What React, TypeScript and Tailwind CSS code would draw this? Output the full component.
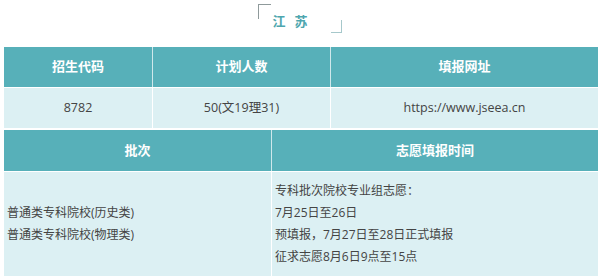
import React from "react";

const headCell =
    "flex items-center justify-center bg-[#57b0b9] text-white text-[13px] font-bold";
const bodyCell = "flex items-center justify-center bg-[#dcf0f3] text-[#444] text-[12.5px]";

const App = () => {
    return (
        <div
            className="w-[600px] h-[278px] bg-white overflow-hidden"
            style={{ fontFamily: '"Open Sans", "Noto Sans CJK SC", sans-serif' }}
        >
            {/* --- Title with corner brackets --- */}
            <div className="flex justify-center items-start h-[47px]">
                <div className="w-[13px] h-[15px] mt-[4px] border-l border-t border-[#8f9a9b]"></div>
                <div className="ml-[1px] mt-[14px] flex gap-[9px] text-[13px] leading-[14px] font-bold text-[#4ea6ae]">
                    <span>江</span>
                    <span>苏</span>
                </div>
                <div className="ml-[23px] mt-[20px] w-[11px] h-[13px] border-r border-b border-[#a6c8cb]"></div>
            </div>

            {/* --- Table --- */}
            <div className="ml-[4px] w-[594px] flex flex-col gap-[1px] bg-white">
                <div className="grid grid-cols-[148px_177px_267px] gap-x-[1px] h-[40px] bg-[#cfe8eb]">
                    <div className={headCell}>招生代码</div>
                    <div className={headCell}>计划人数</div>
                    <div className={headCell}>填报网址</div>
                </div>

                <div className="grid grid-cols-[148px_177px_267px] gap-x-[1px] h-[40px] bg-white">
                    <div className={bodyCell}>8782</div>
                    <div className={bodyCell}>50(文19理31)</div>
                    <div className={bodyCell}>https://www.jseea.cn</div>
                </div>

                <div className="grid grid-cols-[267px_326px] gap-x-[1px] h-[41px] mt-[1px] bg-[#cfe8eb]">
                    <div className={headCell}>批次</div>
                    <div className={headCell}>志愿填报时间</div>
                </div>

                <div className="grid grid-cols-[267px_326px] gap-x-[1px] h-[104px] bg-white text-[12px] leading-[22px] text-[#444]">
                    <div className="flex flex-col justify-center pl-[3px] bg-[#dcf0f3]">
                        <span>普通类专科院校(历史类)</span>
                        <span>普通类专科院校(物理类)</span>
                    </div>
                    <div className="flex flex-col justify-center pl-[3px] bg-[#dcf0f3]">
                        <span>专科批次院校专业组志愿：</span>
                        <span>7月25日至26日</span>
                        <span>预填报，7月27日至28日正式填报</span>
                        <span>征求志愿8月6日9点至15点</span>
                    </div>
                </div>
            </div>
        </div>
    );
};

export default App;
